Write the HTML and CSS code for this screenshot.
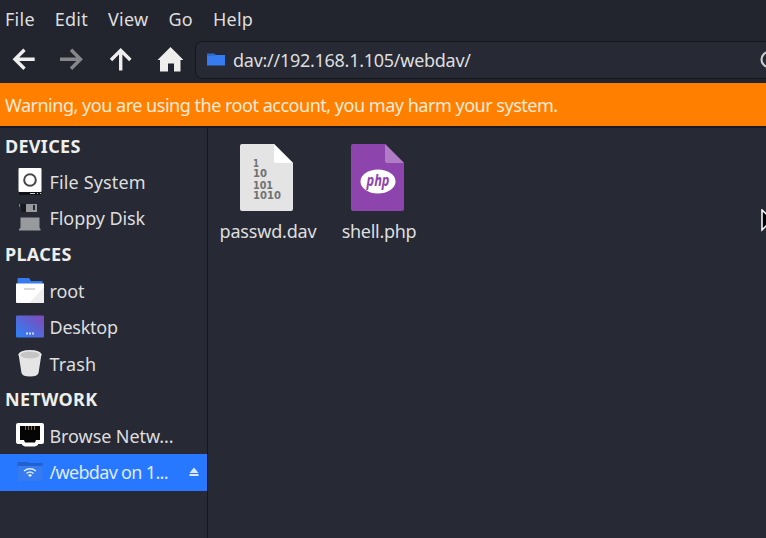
FILE: index.html
```html
<!DOCTYPE html>
<html lang="en">
<head>
<meta charset="utf-8">
<title>webdav - Thunar</title>
<link rel="stylesheet" href="styles.css">
</head>
<body>
<div class="window">
  <nav class="menubar"><span>File</span><span>Edit</span><span>View</span><span>Go</span><span>Help</span></nav>
  <div class="toolbar">
    <div class="buttons">
      <svg width="24" height="24" viewBox="0 0 24 24" class="stroke"><path d="M22.700 12.300H3M12.500 2.800L3 12.300l9.500 9.500"/></svg>
      <svg width="24" height="24" viewBox="0 0 24 24" class="stroke dim"><path d="M0 12.300h20M11 2.800L20.500 12.300l-9.500 9.500"/></svg>
      <svg width="24" height="24" viewBox="0 0 24 24" class="stroke"><path d="M12.700 23.500V3.500M3 13L12.700 3.300l9.700 9.700"/></svg>
      <svg width="27" height="26" viewBox="0 0 27 26"><path fill="#eeeeec" d="M14.500 0L27.500 13h-3v11.500h-6.500v-8h-6v8H4V13H1.500z"/></svg>
    </div>
    <div class="location">
      <svg width="18" height="14" viewBox="0 0 18 14"><path fill="#2c6bd0" d="M0 .5h7L9 2h9v10H0z"/><path fill="#367bf0" d="M0 3h7l2-1h9v10.500H0z"/></svg>
      <span class="url">dav://192.168.1.105/webdav/</span>
      <svg class="reload" width="20" height="20" viewBox="0 0 20 20"><circle cx="10" cy="9.500" r="7.500" fill="none" stroke="#c9cacb" stroke-width="2.200"/></svg>
    </div>
  </div>
  <div class="warning"><span>Warning, you are using the root account, you may harm your system.</span></div>
  <div class="main">
    <aside class="sidebar">
      <h2>DEVICES</h2>
      <div class="row"><svg width="28" height="28" viewBox="0 0 28 28"><path fill="#111215" d="M3 22h22v5H3z"/><rect x="2.500" y="0" width="23" height="24" rx="1" fill="#fff"/><circle cx="14" cy="12" r="5.800" fill="none" stroke="#45474b" stroke-width="2"/><path stroke="#111215" stroke-width="2" d="M3 26h22"/><path stroke="#ccc" d="M14 25.500h5M21 25.500h1M24 25.500h1"/></svg><span class="name spaced">File System</span></div>
      <div class="row floppy"><svg width="28" height="28" viewBox="0 0 28 28"><path fill="#17191e" d="M5 0h16v8H5z"/><path fill="#999a9d" d="M10 0h11v8H10z"/><path fill="#292c35" d="M17 1h2v5h-2z"/><path fill="#777980" d="M3 0h1v3H3z"/><path fill="#999a9d" d="M4.500 13.500h19V24l1 1v1.500H3V25l1.500-1z"/></svg><span class="name">Floppy Disk</span></div>
      <h2>PLACES</h2>
      <div class="row"><svg width="28" height="28" viewBox="0 0 28 28"><path fill="#367bf0" d="M1.500 2q0-1 1-1H13l2 3h11.500v4h-25z"/><path fill="#fff" d="M0 6.500h28V25q0 1-1 1H1q-1 0-1-1z"/><path fill="#eee" d="M28 10v15q0 1-1 1H13z"/><path stroke="#ccc" stroke-width="1.500" d="M8 12h11"/></svg><span class="name">root</span></div>
      <div class="row"><svg width="28" height="28" viewBox="0 0 28 28"><defs><linearGradient id="desk" x1="0" y1="1" x2="1" y2="0"><stop offset=".15" stop-color="#367bf0"/><stop offset="1" stop-color="#8547b5"/></linearGradient></defs><rect y="2.500" width="28" height="22" rx="1" fill="url(#desk)"/><path stroke="#d8dafa" stroke-width="2" stroke-dasharray="2 1" d="M10 20.500h8"/></svg><span class="name tucked">Desktop</span></div>
      <div class="row"><svg width="28" height="28" viewBox="0 0 28 28"><path fill="#e5e5e5" d="M2.500 4l3 19q1 3.500 8.500 3.500t8.500-3.500l3-19z"/><ellipse cx="14" cy="4.500" rx="11.500" ry="4.500" fill="#e9e9e9"/><ellipse cx="14" cy="5" rx="9.800" ry="3.500" fill="#c5c5c5"/></svg><span class="name spaced">Trash</span></div>
      <h2>NETWORK</h2>
      <div class="row"><svg width="28" height="28" viewBox="0 0 28 28"><path fill="#fff" d="M2 1h24q2 0 2 2v17q0 2-2 2h-4v1l-3 1.500H9L6 23v-1H2q-2 0-2-2V3q0-2 2-2z"/><path fill="#050505" d="M4 4h20v14h-4l-1 2.500H9L8 18H4z"/><path stroke="#80682d" d="M9.500 4v4M12.500 4v4M15.500 4v4M18.500 4v4"/></svg><span class="name">Browse Netw...</span></div>
      <div class="row selected"><svg width="28" height="28" viewBox="0 0 28 28"><path fill="#2060cf" d="M1.500 4h10l3 1h12v5h-25z"/><path fill="#367bf0" d="M1.500 8h25v15h-25z"/><g fill="none" stroke="#e0eafd" stroke-width="1.500"><path d="M8 13q6-4.500 12 0M10.500 15.500q3.500-3 7 0"/></g><path fill="#fff" d="M12 17q2-1.500 4 0l-2 2z"/></svg><span class="name tight">/webdav on 1...</span><svg class="eject" width="10" height="10" viewBox="0 0 10 10"><path fill="#dbe8ff" d="M5 .5L9.500 6h-9zM.5 7h9v2h-9z"/></svg></div>
    </aside>
    <section class="files">
      <figure><svg width="53" height="68" viewBox="0 0 53 68"><path fill="#e4e4e4" d="M2 0h32l19 19v46q0 2-2 2H2q-2 0-2-2V2q0-2 2-2z"/><path fill="#fff" d="M34 0l19 19H36q-2 0-2-2z"/><g class="binary"><text x="13" y="22.500" textLength="6" lengthAdjust="spacingAndGlyphs">1</text><text x="13" y="33" textLength="14" lengthAdjust="spacingAndGlyphs">10</text><text x="13" y="44.500" textLength="20" lengthAdjust="spacingAndGlyphs">101</text><text x="13" y="55" textLength="28" lengthAdjust="spacingAndGlyphs">1010</text></g></svg><figcaption>passwd.dav</figcaption></figure>
      <figure><svg width="53" height="68" viewBox="0 0 53 68"><path fill="#8e44ad" d="M2 0h32l19 19v46q0 2-2 2H2q-2 0-2-2V2q0-2 2-2z"/><path fill="#af7cc5" d="M34 0l19 19H36q-2 0-2-2z"/><ellipse cx="27" cy="37.500" rx="17.500" ry="12" fill="#fff"/><text class="php" x="15.500" y="41.500" textLength="23" lengthAdjust="spacingAndGlyphs">php</text></svg><figcaption class="narrow">shell.php</figcaption></figure>
    </section>
  </div>
  <svg class="pointer" width="18" height="26" viewBox="0 0 18 26"><path d="M1 1v20l5-5 4 8 3-2-4-7h7z" fill="#000" stroke="#fff" stroke-width="1.500"/></svg>
</div>
</body>
</html>
```
FILE: styles.css
```css
* { box-sizing: border-box; }
body { margin: 0; background: #272a34; color: #dededf; font: 18px/24px "Noto Sans", sans-serif; }
svg { display: block; flex: none; }
.window { width: 766px; height: 538px; overflow: hidden; position: relative; display: flex; flex-direction: column; }
.menubar { height: 38px; flex: none; display: flex; gap: 20px; padding: 7px 5px 0; background: #23252e; letter-spacing: .25px; }
.toolbar { height: 45px; flex: none; display: flex; background: #23252e; }
.buttons { width: 195px; flex: none; display: flex; gap: 24px; padding: 9px 0 0 12px; }
.stroke { fill: none; stroke: #eeeeec; stroke-width: 3.4; }
.dim { stroke: #85878a; }
.location { flex: none; width: 590px; height: 38px; margin-top: 3px; display: flex; align-items: center; border: 1px solid #14161a; border-radius: 7px; background: #272a34; padding-left: 11px; }
.url { width: 240px; margin-left: 8px; letter-spacing: -.27px; }
.reload { margin-left: 286px; }
.warning { height: 45px; flex: none; background: #ff7f00; border-bottom: 2px solid #17191e; padding: 10px 5px; color: #ffebd7; white-space: nowrap; letter-spacing: -.48px; }
.main { flex: 1; min-height: 0; display: flex; }
.sidebar { width: 208px; flex: none; border-right: 1px solid #14161a; }
h2 { height: 36.25px; margin: 0; padding: 5.5px 5px; font-size: 18px; line-height: 24px; letter-spacing: .3px; color: #eeeeec; }
.row { height: 36.25px; display: flex; align-items: center; padding-left: 15.5px; gap: 6px; white-space: nowrap; }
.floppy { padding-bottom: 1.5px; }
.name { letter-spacing: -.08px; }
.spaced { letter-spacing: .15px; }
.tucked { letter-spacing: -.25px; }
.selected { background: #2777ff; color: #dfebff; }
.tight { width: 118px; letter-spacing: -.68px; }
.eject { margin-left: 15.5px; }
.files { flex: 1; display: flex; padding: 16px 0 0 3px; }
figure { margin: 0; width: 111px; display: flex; flex-direction: column; align-items: center; }
figcaption { margin: 7px 0 0 3px; letter-spacing: -.18px; }
.narrow { letter-spacing: -.3px; }
.binary { font: bold 10.5px "DejaVu Sans", sans-serif; fill: #727272; }
.php { font: italic bold 16px "Open Sans", sans-serif; fill: #8e44ad; }
.pointer { position: absolute; left: 760.5px; top: 209px; }
```
